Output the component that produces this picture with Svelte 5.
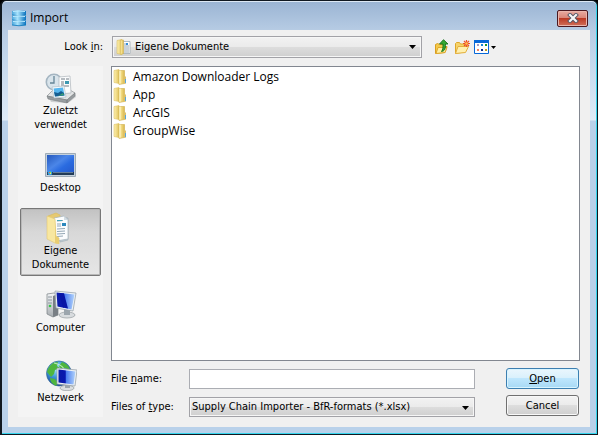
<script>
  const places = [
    { id: 'recent', lines: ['Zuletzt', 'verwendet'] },
    { id: 'desktop', lines: ['Desktop'] },
    { id: 'documents', lines: ['Eigene', 'Dokumente'] },
    { id: 'computer', lines: ['Computer'] },
    { id: 'network', lines: ['Netzwerk'] }
  ];
  const folders = ['Amazon Downloader Logs', 'App', 'ArcGIS', 'GroupWise'];
  let place = $state('documents');
  let fileName = $state('');
</script>

<svg class="defs" width="0" height="0" aria-hidden="true">
  <defs>
    <linearGradient id="gold" x1="0" x2="1"><stop offset="0" stop-color="#fff3b4" /><stop offset=".45" stop-color="#f0d980" /><stop offset="1" stop-color="#d9b64c" /></linearGradient>
    <linearGradient id="leaf" x1="0" x2="1"><stop offset="0" stop-color="#fdf1b0" /><stop offset="1" stop-color="#e2c45e" /></linearGradient>
    <linearGradient id="desk" x1="0" y1="0" x2="1" y2="1"><stop offset="0" stop-color="#2458bd" /><stop offset=".4" stop-color="#4b86e8" /><stop offset=".6" stop-color="#2a6be0" /><stop offset="1" stop-color="#2456c8" /></linearGradient>
    <linearGradient id="screen" x1="0" x2="1"><stop offset="0" stop-color="#0a1aa8" /><stop offset=".4" stop-color="#0818b0" /><stop offset=".45" stop-color="#4a7df0" /><stop offset="1" stop-color="#b4d4fb" /></linearGradient>
    <linearGradient id="metal" x1="0" y1="0" x2="0" y2="1"><stop offset="0" stop-color="#f2f4f6" /><stop offset="1" stop-color="#a9aeb2" /></linearGradient>
    <linearGradient id="db" x1="0" x2="1"><stop offset="0" stop-color="#4aa6dc" /><stop offset=".4" stop-color="#a8e2fb" /><stop offset="1" stop-color="#0872bf" /></linearGradient>
    <radialGradient id="globe" cx=".4" cy=".3" r=".7"><stop offset="0" stop-color="#b8f0ff" /><stop offset=".5" stop-color="#3b97d8" /><stop offset="1" stop-color="#1a3c98" /></radialGradient>
  </defs>
</svg>

{#snippet folder()}
  <svg width="14" height="16" viewBox="0 0 14 16" aria-hidden="true">
    <path d="M1 1.500 6 .5v14l-5-1z" fill="url(#leaf)" stroke="#dfc468" stroke-width=".6" />
    <path d="M6 1.500h5.500v13L6 15.500z" fill="url(#gold)" stroke="#cfae4b" stroke-width=".6" />
    <path d="M7 1.500v13" stroke="#fff6c8" /><path d="M11.500 7.500h1.500v7l-1.500.5z" fill="#dcc068" />
    <path d="M12.500 10v4" stroke="#57a5da" />
  </svg>
{/snippet}

{#snippet placeIcon(id)}
  <svg width="32" height="32" viewBox="0 0 32 32" aria-hidden="true">
    {#if id === 'recent'}
      <path d="m4 26 6-6h20l1 5-8 6-17-1z" fill="#777d80" opacity=".3" />
      <path d="m2 24 6-6h17l5 3-8 7z" fill="#e2e4e5" stroke="#8d9294" stroke-width=".7" />
      <path d="m2 24 20 4v3L3 27zM22 28l8-7v3l-8 7z" fill="#989da0" stroke="#727779" stroke-width=".5" />
      <circle cx="9" cy="10" r="7.700" fill="#d9e4eb" stroke="#a4b5c1" stroke-width="1.600" />
      <path d="M9 4v7H5" fill="none" stroke="#668597" stroke-width="1.300" />
      <path d="m14 5 11-1 1 17-12 1z" fill="#fbfcfd" stroke="#adb5ba" stroke-width=".7" />
      <path d="M16 7h4m1 0h3m-8 3h3m-3 2h3m-3 2h8" stroke="#727c85" /><path d="M20 9h4v3h-4z" fill="#3c98b1" />
      <path d="m7 15 12-1 2 11-12 1z" fill="#f7fafc" stroke="#a7b8c2" stroke-width=".6" />
      <path d="m8.500 16.500 9.500-1 1.500 8-9.500 1z" fill="#55b6ee" /><path d="m9 20 4 1 3-2 3 2 .5 2.500-9.500 1z" fill="#155d91" /><path d="m13 24 5-3 1 2z" fill="#3ba073" />
    {:else if id === 'desktop'}
      <path d="M.5 4.500h30v23H.5z" fill="#c5d2dd" stroke="#9eabb7" />
      <path d="M2 6h27v20H2z" fill="url(#desk)" /><path d="M2 23h27v3H2z" fill="#223b57" />
      <path d="M8 23h20v1H8z" fill="#647d98" /><circle cx="5" cy="24" r="2.300" fill="#3aa6df" />
      <path d="M4 23h1v1H4z" fill="#fa6c2d" /><path d="M5 23h1v1H5z" fill="#9bdd46" /><path d="M5 24h1v1H5z" fill="#ffe254" />
    {:else if id === 'documents'}
      <path d="m12 5 11 1v22l-8 2z" fill="#c4d0d8" stroke="#92a3ad" stroke-width=".5" />
      <path d="M3 4 11 1l4 2v5l-6 20z" fill="#e6c971" stroke="#dabd60" stroke-width=".7" />
      <path d="m9 6 10-2 4 4v19l-12 2z" fill="#fbfdfe" stroke="#a4b1b9" stroke-width=".7" />
      <path d="m19 4 0 4 4 0z" fill="#d2dce3" />
      <path d="m12 9 6-.5M12 12h4m-4 2h4m-4 3 8-.5m-8 3 8-.5m-8 3 8-.5m-8 3 6-.5" stroke="#93a7b5" /><path d="M12 8h5v1h-5z" fill="#42a7ba" /><path d="M17 11h4v3h-4z" fill="#2b88bd" />
      <path d="m2 4 8 3 1 17 3 2v6l-4-1-8-4z" fill="#f8e7a0" stroke="#e3c774" stroke-width=".6" />
      <path d="m10 7 1 17 3 2v6l-4-1z" fill="#e9cd72" />
    {:else if id === 'computer'}
      <path d="m2 5 7-1 4 1v21l-5 2-6-3z" fill="url(#metal)" stroke="#777e83" stroke-width=".7" />
      <path d="m8 7 5-2v21l-5 2z" fill="#797f85" /><path d="M3 8h4m-4 3h4m-4 3h4" stroke="#8c969f" />
      <circle cx="5" cy="17" r="1.300" fill="#32c742" />
      <ellipse cx="22" cy="26" rx="8" ry="3" fill="#d8dcdf" stroke="#949b9f" stroke-width=".7" />
      <path d="M19 20h6v6h-6z" fill="#9ba5ad" />
      <path d="m10 2 21 2-3 18-17-3z" fill="#edf2f5" stroke="#8f9ba4" stroke-width=".7" />
      <path d="m11.500 3.500 18 2-3 15-14-3z" fill="url(#screen)" /><path d="m14 4 5 .5 4 15-5-1z" fill="#0715a5" />
    {:else}
      <circle cx="14" cy="14.500" r="12.500" fill="url(#globe)" stroke="#346b94" stroke-width=".7" />
      <path d="M2 13C4 6 8 3 13 3l-1 4 3 2-5 2-1 4-3 3zM17 3c5 2 7 4 8 8l-5-2-4 1-2-3zM5 19l5 1 3 4-2 3c-4-2-6-5-6-8z" fill="#4fb63e" />
      <path d="M9 4c5 1 8 2 10 6" fill="none" stroke="#d5f7d4" stroke-width="1.200" opacity=".8" />
      <ellipse cx="22" cy="29" rx="7" ry="2.700" fill="#dadee0" stroke="#969da1" stroke-width=".7" />
      <path d="M20 24h5v5h-5z" fill="#9ca6ad" />
      <path d="m12 9 20 2-2 16-18-2z" fill="#edf2f5" stroke="#8f9ba4" stroke-width=".7" />
      <path d="m13.500 10.500 17 2-2 13-15-2z" fill="url(#screen)" />
    {/if}
  </svg>
{/snippet}

<div class="window">
  <header>
    <svg width="16" height="17" viewBox="0 0 16 17" aria-hidden="true">
      {#each [0, 5, 10] as y}
        <path d="M1 {y + 1}q7-1.500 14 0v4q-7 1.500-14 0z" fill="url(#db)" />
        <path d="M1 {y + 5}q7 1.500 14 0" fill="none" stroke="#0876bb" stroke-width=".8" />
        <path d="M2 {y + 1.5}q6-1 12 0" fill="none" stroke="#bbebff" />
      {/each}
    </svg>
    <h1>Import</h1>
    <button class="close" aria-label="Close">
      <svg width="12" height="10" viewBox="0 0 12 10" aria-hidden="true"><path d="m3 2 6 6m0-6-6 6" stroke="#535666" stroke-width="4" stroke-linecap="square" /><path d="m3 2 6 6m0-6-6 6" stroke="#f7f7f7" stroke-width="2.200" stroke-linecap="square" /></svg>
    </button>
  </header>

  <main>
    <div class="toolbar">
      <label for="look">Look <u>i</u>n:</label>
      <div class="combo look">
        <select id="look"><option>Eigene Dokumente</option></select>
        <svg class="lead" width="15" height="16" viewBox="0 0 15 16" aria-hidden="true">
          <path d="M1 1.500 6 .5v15l-5-1z" fill="url(#leaf)" stroke="#d8bd60" stroke-width=".6" />
          <path d="M7 2.500h7v12H7z" fill="#fff" stroke="#9cabb5" stroke-width=".8" />
          <path d="M8 5h2m-2 2h5M8 9h5m-5 2h5m-5 2h5" stroke="#93a4b3" /><path d="M10 4h2v2h-2z" fill="#338edb" />
          <path d="M4.500 1h3v13.500l-3 1z" fill="url(#gold)" stroke="#cfae4b" stroke-width=".5" />
        </svg>
        <svg class="arrow" width="7" height="4" viewBox="0 0 7 4" aria-hidden="true"><path d="M0 0h7L3.500 4z" /></svg>
      </div>
      <div class="tools">
        <button aria-label="Up one level">
          <svg width="16" height="16" viewBox="0 0 16 16" aria-hidden="true">
            <path d="M1.500 14.500v-9l2-1 2 1H10v2h3l-2 6z" fill="#f3c94a" stroke="#d99d20" /><path d="m2 14.500 2-6h9l-2 5z" fill="#fff0a4" stroke="#dfa72a" />
            <path d="M9.500 .7 14 5h-2.500c0 4.500-.5 7-4 7.500 1.500-2 1.500-4 1.500-7.500H5.500z" fill="#35a832" stroke="#16721b" stroke-width=".9" />
          </svg>
        </button>
        <button aria-label="Create new folder">
          <svg width="16" height="16" viewBox="0 0 16 16" aria-hidden="true">
            <path d="M1.500 14.500v-10l1-1h3l1 1.500H11v3l-1 5z" fill="#f6d36b" stroke="#dfa72a" /><path d="m1.500 14.500 2.500-7h10.500l-3 6z" fill="#fff0b0" stroke="#e3b03e" />
            <path d="M12.500 1v7M9 4.500h7M10 2l5 5m0-5-5 5" stroke="#ee5028" stroke-width="1.200" /><circle cx="12.500" cy="4.500" r="1.300" fill="#ffbd4c" />
          </svg>
        </button>
        <button aria-label="View menu">
          <svg width="23" height="16" viewBox="0 0 23 16" aria-hidden="true">
            <path d="M.5 1.500h14v13H.5z" fill="#fff" stroke="#0868d8" /><path d="M0 1h15v3H0z" fill="#0868d8" />
            <path d="M3 5h2v2H3z" fill="#a29ac4" /><path d="M7 5h2v2H7z" fill="#1784da" /><path d="M11 5h2v2h-2z" fill="#16952b" />
            <path d="M3 10h2v2H3z" fill="#f18260" /><path d="M7 10h2v2H7z" fill="#082a91" /><path d="M11 10h2v2h-2z" fill="#c39b18" />
            <path d="M17 7h5l-2.500 3z" />
          </svg>
        </button>
      </div>
    </div>

    <nav aria-label="Places">
      {#each places as p}
        <button class="place" class:selected={place === p.id} onclick={() => (place = p.id)}>
          {@render placeIcon(p.id)}
          {#each p.lines as line}<span>{line}</span>{/each}
        </button>
      {/each}
    </nav>

    <ul class="files">
      {#each folders as name}
        <li><button>{@render folder()}<span>{name}</span></button></li>
      {/each}
    </ul>

    <div class="bottom">
      <div class="fields">
        <label for="name">File <u>n</u>ame:</label>
        <input id="name" type="text" bind:value={fileName} />
        <label for="type">Files of <u>t</u>ype:</label>
        <div class="combo">
          <select id="type"><option>Supply Chain Importer - BfR-formats (*.xlsx)</option></select>
          <svg class="arrow" width="7" height="4" viewBox="0 0 7 4" aria-hidden="true"><path d="M0 0h7L3.500 4z" /></svg>
        </div>
      </div>
      <div class="actions">
        <button class="action open"><span><u>O</u>pen</span></button>
        <button class="action">Cancel</button>
      </div>
    </div>
  </main>
</div>

<style>
  :global(body) { margin: 0; background: #000; }
  .defs { position: absolute; }
  svg { display: block; flex: none; }
  button, input, select, label { font: 11px/14px "DejaVu Sans Condensed", "Noto Sans", sans-serif; color: #000; }
  button { padding: 0; border: 0; background: none; }
  .window {
    box-sizing: border-box;
    min-height: 100vh;
    display: flex;
    flex-direction: column;
    padding: 0 7px 7px 6px;
    border: 1px solid #101820;
    border-left-width: 2px;
    border-radius: 6px 6px 0 0;
    background:
      linear-gradient(#9ab4d3 0, #b7cce4 30px, #c4d8ed 60px, #dfebf7 119px, #b9d1ea 120px);
    box-shadow: inset -1px -1px #35d5ed, inset 0 1px #dce8f4;
  }
  header { display: flex; align-items: center; height: 29px; padding: 5px 2px 0 3px; box-sizing: border-box; }
  h1 { flex: 1; margin: 0 0 0 3px; font: 12px/16px "Open Sans", sans-serif; }
  .close {
    display: flex; align-items: center; justify-content: center;
    box-sizing: border-box; width: 31px; height: 17px;
    border: 1px solid #4b1820; border-radius: 2px;
    background: linear-gradient(#e8aba1, #d98477 48%, #bb3a25 50%, #d0705a);
    box-shadow: inset 0 0 0 1px #e9b5ac;
  }
  main {
    flex: 1;
    display: grid;
    grid-template-columns: 85px minmax(0, 1fr);
    grid-template-rows: 22px minmax(0, 1fr) 48px;
    column-gap: 8px;
    row-gap: 8px;
    padding: 6px 10px 10px;
    background: #f0f0f0;
  }
  .toolbar { grid-column: 1 / 3; display: flex; align-items: center; }
  .toolbar label { width: 85px; text-align: right; }
  .combo { position: relative; }
  .look { flex: 1; margin-left: 9px; }
  .combo select {
    display: block; box-sizing: border-box; width: 100%; height: 20px; padding: 0 20px 0 2px;
    appearance: none; border: 1px solid #a2a2a7; border-radius: 0;
    background: linear-gradient(#f2f2f2, #ebebeb 48%, #dddddd 50%, #cfcfcf);
    box-shadow: inset 0 0 0 1px #f6f6f6;
  }
  .combo.look select { height: 22px; padding-left: 22px; }
  .lead { position: absolute; left: 4px; top: 3px; }
  .arrow { position: absolute; right: 6px; top: 9px; }
  .tools { display: flex; gap: 4px; margin: 0 83px 0 12px; }
  nav { grid-row: 2 / 4; display: flex; flex-direction: column; gap: 9px; padding: 2px; background: #f4f4f4; }
  .place {
    box-sizing: border-box; display: flex; flex-direction: column; align-items: center;
    padding: 3px; border: 1px solid transparent; border-radius: 2px;
  }
  .place:last-child { margin-top: 7px; }
  .selected { border-color: #777; background: linear-gradient(#c2c2c2, #d8d8d8 35%, #e6e6e6); box-shadow: inset 0 0 0 1px #b8b8b8; }
  .files { margin: 0; padding: 1px; border: 1px solid #828790; background: #fff; list-style: none; }
  .files button { display: flex; align-items: center; gap: 6px; height: 18px; font: 12px/18px "Open Sans", sans-serif; }
  .bottom { display: flex; gap: 31px; }
  .fields { flex: 1; display: grid; grid-template-columns: 70px minmax(0, 1fr); grid-auto-rows: 20px; column-gap: 8px; row-gap: 8px; align-items: center; }
  input { box-sizing: border-box; width: 100%; height: 20px; padding: 0 3px; border: 1px solid #abadb3; border-radius: 0; background: #fff; }
  .actions { display: flex; flex-direction: column; gap: 6px; width: 73px; margin: -1px 1px 0 0; }
  .action {
    box-sizing: border-box; height: 21px; border: 1px solid #707070; border-radius: 3px;
    background: linear-gradient(#f3f3f3, #ebebeb 48%, #dddddd 50%, #cfcfcf);
    box-shadow: inset 0 0 0 1px #f8f8f8;
  }
  .open { border-color: #3c7fb1; background: linear-gradient(#eaf6fd, #d9f0fc 48%, #bee6fd 50%, #a7d9f5); box-shadow: inset 0 0 0 1px #d8f4ff; }
</style>
